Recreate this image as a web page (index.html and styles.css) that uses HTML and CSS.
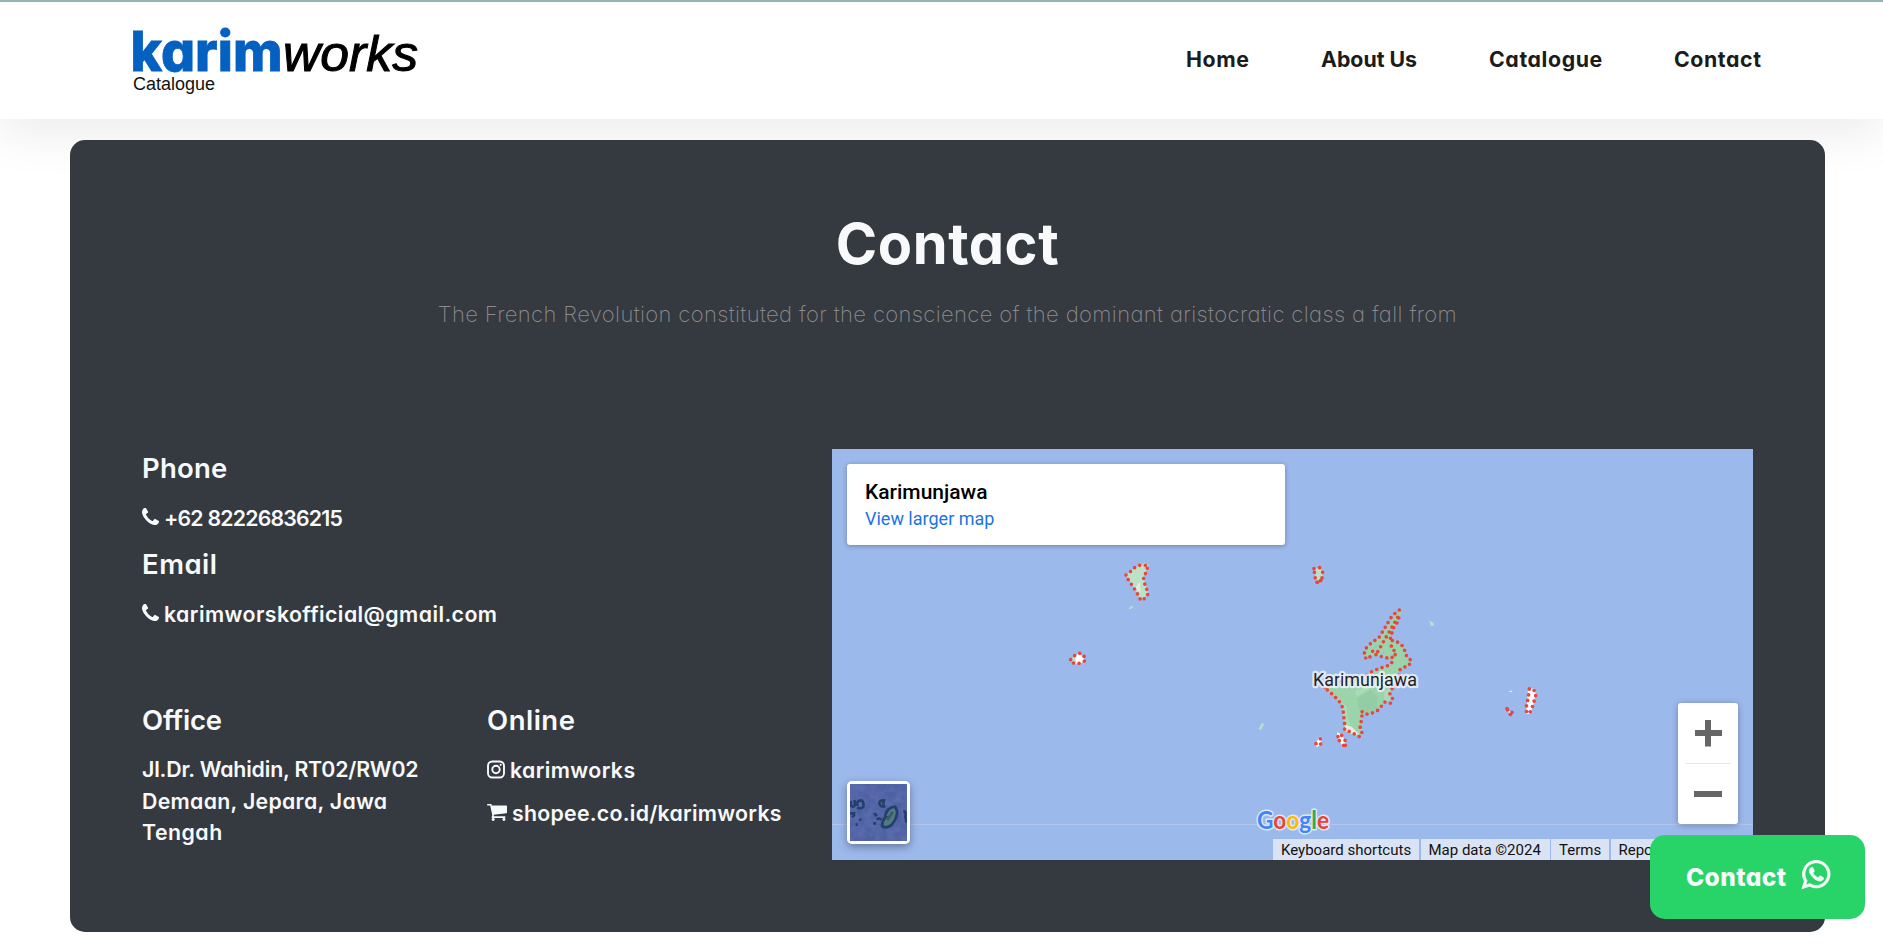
FILE: index.html
```html
<!DOCTYPE html>
<html lang="en">
<head>
<meta charset="utf-8">
<title>Karimworks Catalogue</title>
<link rel="stylesheet" href="styles.css">
</head>
<body>
<header class="header">
  <a class="brand" aria-label="karimworks Catalogue">
    <svg width="300" height="94" viewBox="130 4 300 94">
      <text class="logo-karim" x="130.500" y="70.500" textLength="152" lengthAdjust="spacingAndGlyphs">karim</text>
      <text class="logo-works" x="283" y="70.500" textLength="135" lengthAdjust="spacingAndGlyphs">works</text>
      <text class="logo-sub" x="133" y="90" textLength="82" lengthAdjust="spacingAndGlyphs">Catalogue</text>
    </svg>
  </a>
  <nav class="nav">
    <a class="n1">Home</a><a class="n2">About Us</a><a class="n3">Catalogue</a><a class="n4">Contact</a>
  </nav>
</header>

<main class="panel">
  <h1 class="title">Contact</h1>
  <p class="lead">The French Revolution constituted for the conscience of the dominant aristocratic class a fall from</p>
  <div class="columns">
    <div class="info">
      <section class="wide">
        <h2 class="t-phone">Phone</h2>
        <p class="row"><svg class="i-phone" viewBox="0 128 1408 1408"><use href="#phone"/></svg><span class="v-phone">+62 82226836215</span></p>
        <h2 class="t-email second">Email</h2>
        <p class="row"><svg class="i-phone" viewBox="0 128 1408 1408"><use href="#phone"/></svg><span class="v-email">karimworskofficial@gmail.com</span></p>
      </section>
      <section>
        <h2 class="t-office">Office</h2>
        <p class="row address"><span class="a1">Jl.Dr. Wahidin, RT02/RW02</span><br><span class="a2">Demaan, Jepara, Jawa</span><br><span class="a3">Tengah</span></p>
      </section>
      <section>
        <h2 class="t-online">Online</h2>
        <p class="row"><svg class="i-insta" viewBox="0 0 18 18"><rect x="1" y="1" width="16" height="16" rx="4.200"/><circle cx="9" cy="9" r="3.700"/><circle class="dot" cx="13.700" cy="4.300" r="1.100"/></svg><span class="v-insta">karimworks</span></p>
        <p class="row shop"><svg class="i-cart" viewBox="0 128 1664 1408"><path d="M640 1408q0 52-38 90t-90 38-90-38-38-90 38-90 90-38 90 38 38 90zm896 0q0 52-38 90t-90 38-90-38-38-90 38-90 90-38 90 38 38 90zm128-1088v512q0 24-16.500 42.500T1607 896L563 1018q13 60 13 70 0 16-24 64h920q26 0 45 19t19 45-19 45-45 19H448q-26 0-45-19t-19-45q0-11 8-31.500t16-36 21.500-40T445 1079L268 256H64q-26 0-45-19T0 192t19-45 45-19h256q16 0 28.500 6.500T368 150t13 24.500 8 26 5.500 29.500 4.500 26h1201q26 0 45 19t19 45z"/></svg><span class="v-shop">shopee.co.id/karimworks</span></p>
      </section>
    </div>

    <div class="map">
      <svg class="canvas" width="921" height="411" viewBox="832 449 921 411">
        <path class="tile" d="M832 824.500h921"/>
        <g transform="translate(820 440) scale(.33333)">
          <path class="pale" d="M918 405L945 382 975 368 986 376 970 410 985 460 963 482 938 438z"/>
          <path class="sand" d="M945 445l14-20 2 32z"/>
          <path class="edge" d="M918 405L934 393 945 382 957 376 984 376 979 397 970 410 973 428 979 445 985 460 978 473 963 482 950 457 938 438 926 422z"/>
          <path class="pale" d="M926 506l8-9 6 4-8 6z"/>
          <path class="white" d="M752 659l26-21 19 24-19 10-18-2z"/>
          <path class="pale" d="M750 659l15-12 3 22-8 2z"/>
          <path class="edge" d="M752 659L765 646 781 639 793 650 796 662 778 670 761 670z"/>
          <path class="pale" d="M1482 386l18-3 9 20-7 25-10 1z"/>
          <path class="edge" d="M1482 386l17-3 9 13-2 18-13 13-8-15z"/>
        </g>
        <g transform="translate(1240 580) scale(.33333)">
          <path class="land" d="M478 90L486 92 472 130 455 150 452 180 466 182 492 202 500 230 514 243 506 258 478 271 452 325 448 343 458 358 434 367 411 393 366 404 364 470 340 460 312 450 313 400 303 370 250 323 300 300 350 296 398 273 448 255 458 240 440 233 405 225 380 238 372 225 375 207 400 184 416 174z"/>
          <path class="mid" d="M345 332l35-12 8 8-38 22zM431 330l22-4-5 24 8 8-24 10z"/>
          <path class="shade" d="M352 355l40-25 20 20-2 40-44 10-12-20z"/>
          <path class="mid" d="M303 365l18 15 2 30 8 25-18 0z"/>
          <path class="sand" d="M315 434l20 6 22 22-12 4-31-14z"/>
          <path class="water" d="M402 196l9 2-3 10zM422 220l13-7-6 12z"/>
          <path class="edge" d="M478 90L464 101 452 114 434 145 416 174 400 184 386 196 375 208 372 226 380 238 392 229M398 214l9-5M408 224L425 230 442 234 456 231 459 243 448 256 430 261 398 273 375 290 340 306 295 306 250 323 266 332 279 345 292 358 303 371 309 386 312 415 314 433 314 450 327 454 343 462 358 470 367 461 360 445 366 410 364 394 377 403 394 400 411 393 423 380 434 366 451 370 459 358 449 343 455 327 480 303 478 271 489 262 506 258 514 242 501 231 495 217 492 202 480 191 464 181 448 182 455 167 456 151 466 136 476 122 477 105zM454 198l9 13-5 4 9 11"/>
          <path class="pale" d="M568 122l13 7v9l-9-1zM56 447l9-17 8 1-10 18z"/>
          <path class="white" d="M864 326l20 0 3 17-8 35-9 24-12-1 4-40zM800 388l17 10-4 8zM226 492l10-17 10-1-4 20-12 8zM291 456l17 10 10 30-9 4-15-25zM807 335l11-4-5 6z"/>
          <path class="edge" d="M868 327h12l8 16-5 18-5 17-7 17-11 5-1-20 4-19 3-18z"/>
          <path class="dots" d="M801 386h0M803 390h0M816 397h0M811 403h0M228 491h0M241 477h0M242 492h0M294 470h0M305 466h0M298 482h0M315 481h0M311 496h0M316 496h0M231 7h0M242 2h0"/>
        </g>
        <text class="place" x="1313" y="685.500" textLength="104">Karimunjawa</text>
        <text class="google" x="1257" y="829" textLength="72" lengthAdjust="spacingAndGlyphs"><tspan fill="#4285f4">G</tspan><tspan fill="#ea4335">o</tspan><tspan fill="#fbbc05">o</tspan><tspan fill="#4285f4">g</tspan><tspan fill="#34a853">l</tspan><tspan fill="#ea4335">e</tspan></text>
      </svg>
      <div class="place-card"><strong>Karimunjawa</strong><a>View larger map</a></div>
      <div class="satellite">
        <svg width="57" height="57" viewBox="0 0 171 171">
          <defs><filter id="terrain"><feTurbulence type="fractalNoise" baseFrequency=".045" numOctaves="3" seed="8"/><feColorMatrix values="0 0 0 0 .4  0 0 0 0 .45  0 0 0 0 .8  .9 .4 0 0 -.4"/></filter><filter id="soft"><feGaussianBlur stdDeviation="2"/></filter></defs>
          <rect width="171" height="171" fill="#4d60a2"/>
          <rect width="171" height="171" filter="url(#terrain)" opacity=".3"/>
          <g filter="url(#soft)" fill="none" stroke="#243f69" stroke-width="8">
            <path d="M2 50v14q8 8 12 0V48M22 66q-3-16 10-17 11 1 8 20-10 7-18 1M0 88h16M6 100l8-8M28 107h6M17 122h6"/>
            <path d="M106 50q-18-4-18 8 4 14 18 8M100 54v8M73 87l7 10M80 106q10-6 14 2M70 120l8-3M160 80q10 4 6 18 3 12 3 18"/>
            <path fill="#51797f" d="M105 100q4-30 30-32 16 20-8 52-15 16-31 6 0-15 10-26z"/>
            <path stroke="#365b69" d="M112 108l16-24"/>
          </g>
        </svg>
      </div>
      <div class="zoom">
        <svg width="60" height="121" viewBox="0 0 60 121"><path class="bars" d="M17 30h27M30 17v26.500M16 91h28"/><path class="split" d="M8 60.500h45"/></svg>
      </div>
      <div class="legal"><span class="l1">Keyboard shortcuts</span><span class="l2">Map data ©2024</span><span class="l3">Terms</span><span class="l4">Report a map error</span></div>
    </div>
  </div>
</main>

<a class="chat"><span>Contact</span><svg viewBox="0 26 1536 1548"><path d="M985 878q13 0 97.500 44t89.500 53q2 5 2 15 0 33-17 76-16 39-71 65.500t-102 26.500q-57 0-190-62-98-45-170-118T476 793q-72-107-71-194v-8q3-91 74-158 24-22 52-22 6 0 18 1.500t19 1.500q19 0 26.500 6.500T610 448q8 20 33 88t25 75q0 21-34.500 57.500T599 715q0 7 5 15 34 73 102 137 56 53 151 101 12 7 22 7 15 0 54-48.500t52-48.500zm-203 530q127 0 243.500-50t200.500-134 134-200.500 50-243.500-50-243.500T1226 336t-200.500-134T782 152t-243.500 50T338 336 204 536.500 154 780q0 203 120 368l-79 233 242-77q158 104 345 104zm0-1382q153 0 292.500 60T1315 247t161 240.500 60 292.500-60 292.500-161 240.500-240.500 161-292.500 60q-195 0-365-94L0 1574l136-405Q28 991 28 780q0-153 60-292.500T249 247 489.500 86 782 26z"/></svg></a>

<svg class="defs" width="0" height="0"><defs><path id="phone" d="M1408 1240q0 27-10 70.500t-21 68.500q-21 50-122 106-94 51-186 51-27 0-53-3.500t-57.500-12.500-47-14.500T856 1485t-49-18q-98-35-175-83-127-79-264-216T152 904q-48-77-83-175-3-9-18-49t-20.500-55.500-14.500-47T3.500 520 0 467q0-92 51-186 56-101 106-122 25-11 68.500-21t70.500-10q14 0 21 3 18 6 53 76 11 19 30 54t35 63.500 31 53.500q3 4 17.500 25t21.500 35.500 7 28.500q0 20-28.500 50t-62 55-62 53-28.500 46q0 9 5 22.500t8.500 20.500 14 24 11.500 19q76 137 174 235t235 174q2 1 19 11.500t24 14 20.500 8.500 22.500 5q18 0 46-28.500t53-62 55-62 50-28.500q14 0 28.500 7t35.500 21.500 25 17.500q25 15 53.500 31t63.500 35 54 30q70 35 76 53 3 7 3 21z"/></defs></svg>
</body>
</html>
```
FILE: styles.css
```css
* { box-sizing: border-box; }
body {
  margin: 0;
  height: 945px;
  overflow: hidden;
  background: #fff;
  color: #f8f9fa;
  font-family: Inter, "Open Sans", sans-serif;
  font-feature-settings: "cv11";
}
h1, h2, p { margin: 0; }
svg { display: block; }
.defs { position: absolute; }

.header {
  display: flex;
  justify-content: space-between;
  height: 119px;
  padding: 2px 122px 0 130px;
  border-top: 2px solid #93b1b6;
  background: #fff;
  box-shadow: 0 16px 48px rgba(0, 0, 0, .075);
}
.logo-karim { font: 800 55px Inter, sans-serif; font-feature-settings: "cv11"; fill: #0460c1; stroke: #0460c1; stroke-width: .8; }
.logo-works { font: italic 50px "Liberation Sans", sans-serif; fill: #000; stroke: #000; stroke-width: 1; }
.logo-sub { font: 18px "Liberation Sans", sans-serif; fill: #111; }

.nav { display: flex; padding-top: 39px; font-size: 21.3px; font-weight: 700; line-height: 32px; color: #1b1b1b; white-space: nowrap; }
.n1 { width: 135px; letter-spacing: .6px; }
.n2 { width: 168px; }
.n3 { width: 185px; letter-spacing: .6px; }
.n4 { width: 87px; letter-spacing: .6px; }

.panel {
  position: relative;
  width: 1755px;
  height: 792px;
  margin: 21px 0 0 70px;
  padding: 71px 72px 0;
  border-radius: 15px;
  background: #353940;
}
.title { font-size: 56px; font-weight: 650; line-height: 66px; letter-spacing: .6px; text-align: center; white-space: nowrap; }
.lead { margin-top: 21px; font-size: 22px; font-weight: 200; line-height: 32px; letter-spacing: .37px; text-align: center; color: #8b8a8a; white-space: nowrap; }
.columns { display: grid; grid-template-columns: 690px 921px; margin-top: 119px; }

.info { display: grid; grid-template-columns: 345px 345px; grid-template-rows: 252px auto; padding-top: 3px; white-space: nowrap; }
.wide { grid-column: span 2; }
.info h2 { font-size: 27.5px; font-weight: 630; line-height: 33px; }
.info h2.second { margin-top: 14px; }
.t-phone { letter-spacing: .2px; }
.t-email { letter-spacing: .5px; }
.t-office { letter-spacing: -.2px; }
.t-online { letter-spacing: .5px; }
.row { display: flex; align-items: center; margin-top: 17px; font-size: 21.3px; font-weight: 640; line-height: 32px; }
.row svg { flex: none; margin-top: -1px; fill: currentColor; }
.v-phone { letter-spacing: -.8px; }
.v-email { letter-spacing: .43px; }
.a1 { letter-spacing: -.17px; }
.a2 { letter-spacing: .3px; }
.a3 { letter-spacing: .5px; }
.v-insta { letter-spacing: .4px; }
.v-shop { letter-spacing: .27px; }
.address { display: block; line-height: 31.5px; }
.shop { margin-top: 11px; }
.i-phone { width: 17px; height: 17px; margin-right: 5px; }
.row .i-phone { margin-top: -3px; }
.i-insta { width: 18px; height: 19px; margin-right: 5px; }
.i-insta rect, .i-insta circle { fill: none; stroke: currentColor; stroke-width: 1.9; }
.i-insta .dot { fill: currentColor; stroke: none; }
.i-cart { width: 20px; height: 17px; margin-right: 5px; }

.map { position: relative; width: 921px; height: 411px; overflow: hidden; background: #9cb9ec; font-family: Roboto, sans-serif; font-feature-settings: normal; }
.tile { stroke: #b1c4ea; }
.land { fill: #9bd3ab; }
.mid { fill: #aadbb8; }
.shade { fill: #94cda5; }
.pale { fill: #bbe2c6; }
.sand { fill: #e2eee4; }
.white { fill: #fff; }
.water { fill: #9cb9ec; }
.edge { fill: none; stroke: #e8453c; stroke-width: 11; stroke-linecap: round; stroke-dasharray: 0 17; }
.dots { fill: none; stroke: #e8453c; stroke-width: 11; stroke-linecap: round; }
.place { font: 18px Roboto, sans-serif; fill: #222; stroke: rgba(240, 245, 252, .8); stroke-width: 4.5px; stroke-linejoin: round; paint-order: stroke; }
.google { font: 700 24px Lato, sans-serif; stroke: #dfe8f8; stroke-width: 3px; paint-order: stroke; stroke-linejoin: round; }
.place-card {
  position: absolute; left: 15px; top: 15px; width: 438px; height: 81px;
  display: flex; flex-direction: column; padding: 16px 18px;
  border-radius: 3px; background: #fff; color: #000; box-shadow: 0 1px 5px rgba(0, 0, 0, .3);
}
.place-card strong { font-size: 21px; font-weight: 470; line-height: 25px; }
.place-card a { font-size: 18px; line-height: 27px; color: #1a73e8; }
.satellite { position: absolute; left: 15px; top: 332px; width: 63px; height: 63px; border: 3px solid #fff; border-radius: 5px; box-shadow: 0 3px 9px rgba(0, 0, 0, .35); }
.zoom { position: absolute; left: 846px; top: 254px; border-radius: 3px; background: #fff; box-shadow: 0 1px 6px rgba(0, 0, 0, .3); }
.bars { stroke: #666; stroke-width: 6; }
.split { stroke: #e6e6e6; }
.legal { position: absolute; left: 441px; top: 390px; display: flex; gap: 1.5px; font-size: 15px; line-height: 22px; color: #111; white-space: nowrap; }
.legal span { height: 21px; padding-left: 8px; background: #dae3f3; }
.l1 { width: 146px; }
.l2 { width: 129px; }
.l3 { width: 58px; }
.l4 { width: 141px; }

.chat {
  position: absolute; left: 1650px; top: 835px; width: 215px; height: 84px;
  display: flex; align-items: center; padding-left: 36px;
  border-radius: 15px; background: #28d468; font-size: 24.5px; font-weight: 800; white-space: nowrap;
}
.chat span { width: 116px; margin-top: -1px; letter-spacing: .4px; }
.chat svg { width: 28px; height: 29px; margin-top: -6px; overflow: visible; fill: currentColor; stroke: currentColor; stroke-width: 50; }
```
